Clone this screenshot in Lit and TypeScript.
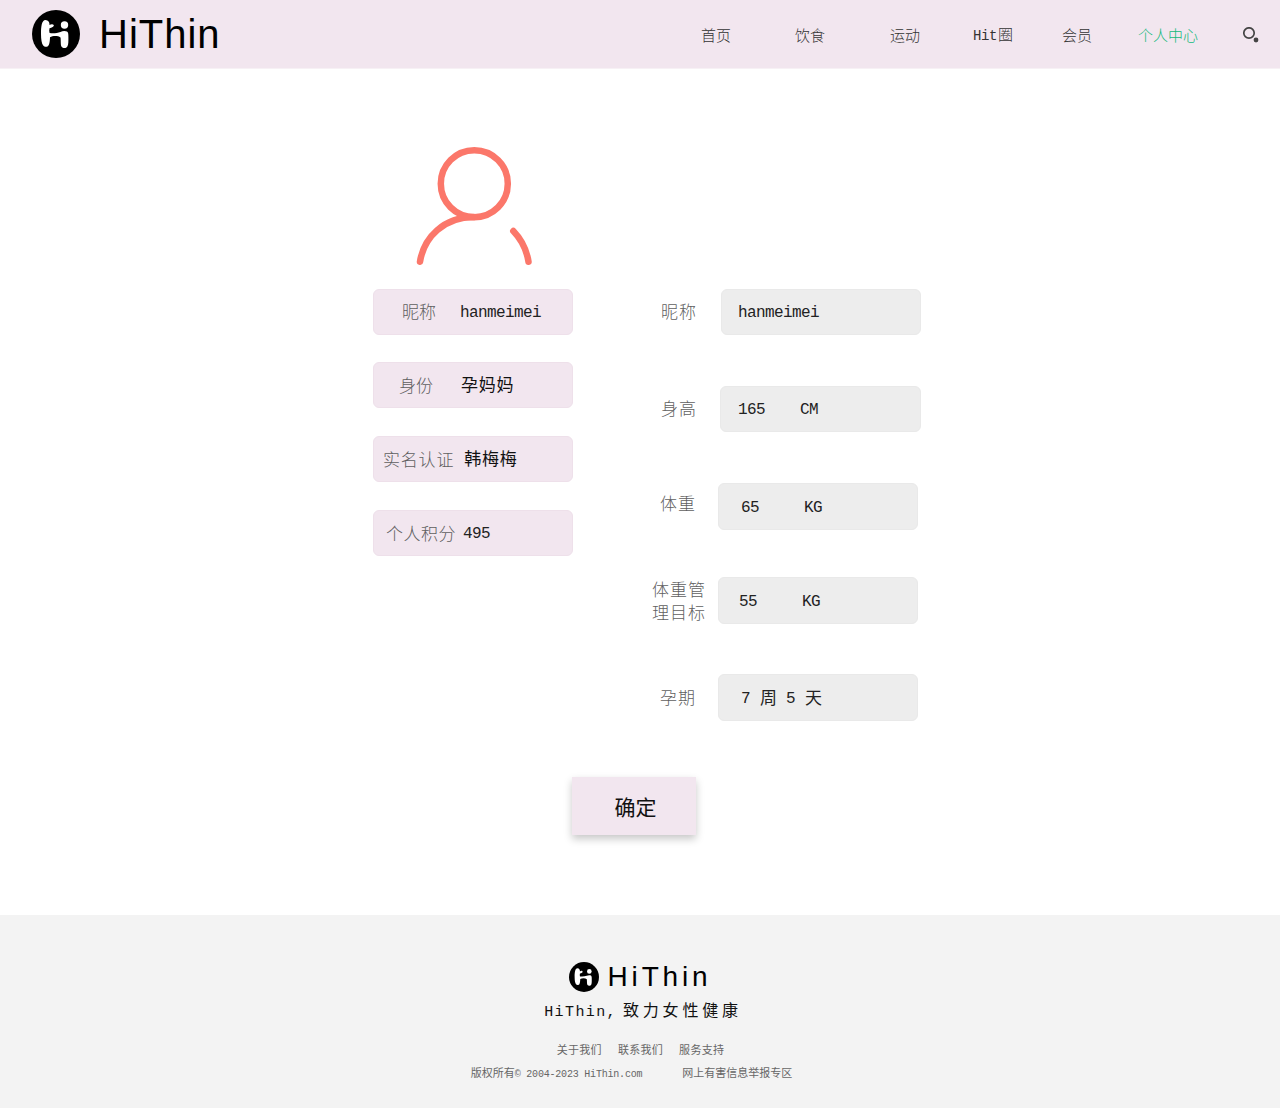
import { LitElement, html, css, svg } from "lit";
import { customElement } from "lit/decorators.js";

const logo = (size: number) => html`<svg class="logo" width=${size} height=${size} viewBox="0 0 48 48">
  <circle cx="24" cy="24" r="24" fill="#000"></circle>
  ${svg`<path fill="#fff" d="M13.500 10C16.300 10 17.700 12.200 17.500 15C18.700 14.100 21 13.700 21.700 15C22.400 16.500 19.900 17.600 17.500 18.300C17.100 19.900 17.100 21.500 17.600 23C21 23.700 25 23.200 28.500 22C30.500 20.800 33.500 20.800 35 21.600C36.200 22.300 36.400 24 36.400 27C36.400 31 36.500 34.300 35.500 36.200C34.300 38.500 31 38.600 29.600 36.800C28.400 35.200 29 31 28.500 27.500C26 25.600 21 25.600 18 27.200C17.900 30 17.800 32.800 16.800 35C15.700 37.300 12.600 37.400 11.200 35.500C9.700 33.500 9 29.500 9 24C9 16.800 9.700 10 13.500 10Z"></path>
  <circle cx="32.500" cy="15" r="3.700" fill="#fff"></circle>`}
</svg>`;

@customElement("app-root")
export class AppRoot extends LitElement {
  static styles = css`
    :host { display: block; background: #fff; color: #222; font-family: "Liberation Mono", "Noto Sans CJK SC", monospace; }
    .zh { font-family: "Noto Sans CJK SC", sans-serif; font-weight: 300; }
    header { height: 68px; background: #f2e6ef; border-bottom: 1px solid #f7f1f5; display: flex; align-items: center; }
    .logo { display: block; flex: none; }
    .brand { display: flex; align-items: center; margin-left: 32px; gap: 19px; margin-top: -1px; }
    .brand-name { font: 40px/48px "Liberation Sans", sans-serif; letter-spacing: 1px; color: #000; }
    nav { margin-left: auto; display: flex; align-items: center; margin-right: 21px; font-size: 15px; color: #333; }
    nav a { white-space: nowrap; line-height: 20px; font-weight: 400; margin-top: 2px; }
    nav a.g64 { margin-right: 64px; }
    nav a.g65 { margin-right: 65px; }
    nav a.g53 { margin-right: 53px; }
    nav a.hit { margin-right: 49px; }
    nav a.member { margin-right: 46px; }
    nav a.on { color: #12b97c; margin-right: 45px; }
    .latin { font-family: "Liberation Mono", monospace; font-size: 14px; letter-spacing: -.4px; margin-right: 1px; }
    .search { display: block; margin-top: 1px; }
    main { height: 846px; display: flex; flex-direction: column; box-sizing: border-box; }
    .columns { display: flex; padding-left: 373px; height: 708px; }
    .left { width: 200px; padding-top: 72px; }
    .avatar { display: block; margin: 0 0 23px 37px; }
    .card { height: 46px; width: 200px; box-sizing: border-box; background: #f2e6ef; border: 1px solid #eee0ea; border-radius: 6px; display: flex; align-items: center; margin-bottom: 28px; }
    .label { color: #5f5f5f; font-size: 17px; letter-spacing: .5px; white-space: nowrap; }
    .val { color: #222; font-size: 16px; letter-spacing: -.6px; white-space: nowrap; margin-top: 2px; }
    .val.zh { font-size: 17px; letter-spacing: .8px; color: #111; margin-top: -4px; font-weight: 400; }
    .c1 { padding-left: 28px; margin-bottom: 27px; } .c1 .val { margin-left: 24px; } .c1 .label { margin-top: -4px; letter-spacing: 0; }
    .c2 { padding-left: 25px; } .c2 .val { margin-left: 28px; } .c2 .label { margin-top: -2px; letter-spacing: 0; }
    .c3 { padding-left: 9px; } .c3 .val { margin-left: 10px; } .c3 .label { margin-top: -2px; letter-spacing: .8px; }
    .c4 { padding-left: 12px; } .c4 .val { margin-left: 7px; } .c4 .label { margin-top: -2px; }
    .right { margin-left: 77px; padding-top: 220px; width: 280px; }
    .row { display: flex; align-items: center; height: 46px; position: relative; }
    .rlabel { color: #5f5f5f; font-size: 17px; letter-spacing: 1px; line-height: 23px; text-align: left; }
    .field { width: 200px; height: 46px; box-sizing: border-box; background: #ededed; border: 1px solid #e9e9e9; border-radius: 6px; display: flex; align-items: center; color: #222; font-size: 16px; letter-spacing: -.6px; white-space: pre; padding-top: 2px; }
    .r1 { margin-left: 11px; } .r1 .rlabel { width: 60px; margin-top: -4px; }
    .r1 .field { padding-left: 16px; }
    .r2 { margin-left: 11px; margin-top: 51px; } .r2 .rlabel { width: 59px; margin-top: -4px; }
    .r2 .field { padding-left: 17px; width: 201px; }
    .r3, .r4, .r5 { height: 47px; }
    .r3 .field, .r4 .field, .r5 .field { height: 47px; }
    .r3 { margin-left: 10px; margin-top: 51px; } .r3 .rlabel { width: 58px; margin-top: -8px; }
    .r3 .field { padding-left: 22px; }
    .r4 { margin-left: 2px; margin-top: 47px; } .r4 .rlabel { width: 66px; margin-top: -2px; }
    .r4 .field { padding-left: 20px; }
    .r5 { margin-left: 10px; margin-top: 50px; } .r5 .rlabel { width: 58px; margin-top: -3px; }
    .r5 .field { padding-left: 22px; }
    .gap1 { margin-left: 35px; } .gap2 { margin-left: 45px; }
    .z { font-family: "Noto Sans CJK SC", sans-serif; font-weight: 400; font-size: 17px; letter-spacing: 0; margin: -5px 9px 0 10px; }
    .btn { align-self: flex-start; margin-left: 572px; width: 124px; height: 58px; background: #f2e6ef; box-shadow: 0 4px 8px rgba(0,0,0,.22); display: flex; align-items: center; justify-content: center; font-size: 21px; color: #111; padding-left: 3px; box-sizing: border-box; font-weight: 400; }
    footer { height: 193px; background: #f3f3f3; display: flex; flex-direction: column; align-items: center; box-sizing: border-box; padding-top: 47px; }
    .f-brand { display: flex; align-items: center; gap: 8px; margin-left: 1px; }
    .f-name { font: 28px/30px "Liberation Sans", sans-serif; letter-spacing: 3.850px; color: #000; }
    .tag { margin-top: 6px; font-size: 16px; line-height: 22px; color: #111; letter-spacing: 3.800px; white-space: nowrap; margin-left: 6px; font-weight: 400; }
    .tag .m { font-family: "Liberation Mono", monospace; font-size: 15px; letter-spacing: 1.400px; margin-right: 6px; }
    .links { display: flex; gap: 16px; margin-top: 17px; font-size: 11px; line-height: 16px; color: #666; letter-spacing: .3px; margin-left: 1px; font-weight: 400; }
    .copy { display: flex; gap: 40px; margin-top: 7px; font-size: 11px; line-height: 16px; color: #666; white-space: nowrap; margin-left: -17px; font-weight: 400; }
    .copy .m { font-family: "Liberation Mono", monospace; font-size: 10px; letter-spacing: -.2px; }
  `;

  render() {
    return html`
      <header>
        <div class="brand">${logo(48)}<span class="brand-name">HiThin</span></div>
        <nav>
          <a class="zh g64">首页</a>
          <a class="zh g65">饮食</a>
          <a class="zh g53">运动</a>
          <a class="zh hit"><span class="latin">Hit</span>圈</a>
          <a class="zh member">会员</a>
          <a class="zh on">个人中心</a>
          <svg class="search" width="16" height="16" viewBox="0 0 16 16">
            <circle cx="6" cy="6" r="5.200" fill="none" stroke="#444" stroke-width="1.700"></circle>
            <circle cx="13" cy="13" r="2.400" fill="#444"></circle>
          </svg>
        </nav>
      </header>
      <main>
        <div class="columns">
          <div class="left">
            <svg class="avatar" width="130" height="125" viewBox="0 0 130 125">
              <g fill="none" stroke="#fb776a" stroke-width="6.500" stroke-linecap="round">
                <circle cx="64.300" cy="42.700" r="33.500"></circle>
                <path d="M10 120.700C14 96 34 76 64 76"></path>
                <path d="M103.300 90C110.500 97.500 116.500 108 118.500 120.700"></path>
              </g>
            </svg>
            <div class="card c1"><span class="label zh">昵称</span><span class="val">hanmeimei</span></div>
            <div class="card c2"><span class="label zh">身份</span><span class="val zh">孕妈妈</span></div>
            <div class="card c3"><span class="label zh">实名认证</span><span class="val zh">韩梅梅</span></div>
            <div class="card c4"><span class="label zh">个人积分</span><span class="val">495</span></div>
          </div>
          <div class="right">
            <div class="row r1"><span class="rlabel zh">昵称</span><div class="field">hanmeimei</div></div>
            <div class="row r2"><span class="rlabel zh">身高</span><div class="field">165<span class="gap1"></span>CM</div></div>
            <div class="row r3"><span class="rlabel zh">体重</span><div class="field">65<span class="gap2"></span>KG</div></div>
            <div class="row r4"><span class="rlabel zh">体重管<br />理目标</span><div class="field">55<span class="gap2"></span>KG</div></div>
            <div class="row r5"><span class="rlabel zh">孕期</span><div class="field">7<span class="z">周</span>5<span class="z">天</span></div></div>
          </div>
        </div>
        <div class="btn zh">确定</div>
      </main>
      <footer>
        <div class="f-brand">${logo(30)}<span class="f-name">HiThin</span></div>
        <div class="tag zh"><span class="m">HiThin,</span>致力女性健康</div>
        <div class="links zh"><span>关于我们</span><span>联系我们</span><span>服务支持</span></div>
        <div class="copy zh"><span>版权所有<span class="m">© 2004-2023 HiThin.com</span></span><span>网上有害信息举报专区</span></div>
      </footer>
    `;
  }
}
